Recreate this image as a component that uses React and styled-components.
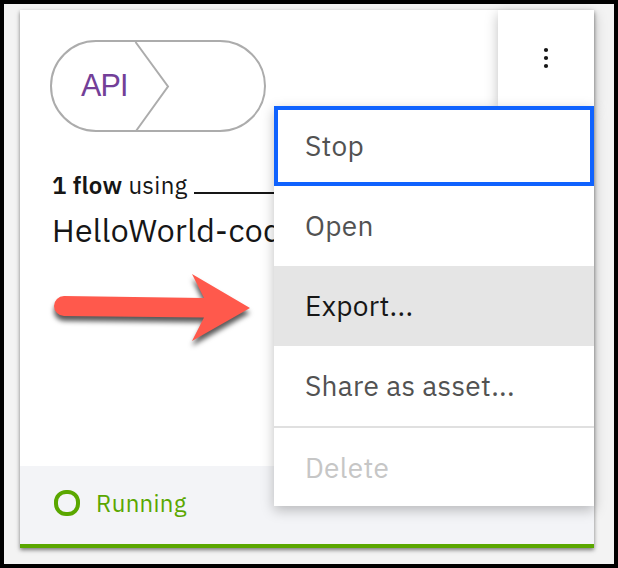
import React from "react";
import styled, { createGlobalStyle } from "styled-components";

const GlobalStyle = createGlobalStyle`
  *, *::before, *::after { box-sizing: border-box; }
  body { margin: 0; font-family: "IBM Plex Sans", "Open Sans", "Noto Sans", sans-serif; color: #161616; }
`;

const Frame = styled.main`
  width: 618px;
  height: 568px;
  padding: 6px 20px 16px 16px;
  border: 4px solid #000;
  background: #f3f3f3;
  overflow: hidden;
`;

const Card = styled.article`
  position: relative;
  display: flex;
  flex-direction: column;
  width: 574px;
  height: 538px;
  background: #fff;
  border-bottom: 4px solid #5aa700;
  box-shadow: 0 2px 4px rgba(0, 0, 0, 0.5);
`;

const CardHeader = styled.header`
  display: flex;
  justify-content: space-between;
  height: 96px;
  padding-left: 30px;
`;

const FlowBadge = styled.svg`
  display: block;
  width: 218px;
  height: 94px;
  margin-top: 29px;
`;

const OverflowButton = styled.button`
  display: flex;
  align-items: center;
  justify-content: center;
  width: 96px;
  height: 96px;
  padding: 0;
  border: 0;
  background: #fff;
  box-shadow: 0 4px 12px rgba(0, 0, 0, 0.25);
`;

const CardBody = styled.section`
  flex: 1;
  padding: 61px 0 0 32px;
`;

const Summary = styled.div`
  display: flex;
  height: 36px;
  line-height: 36px;
  font-size: 24px;
  letter-spacing: 0.32px;
  white-space: pre;
`;

const SummaryText = styled.div`
  display: flex;
  width: 142px;
`;

const FlowCount = styled.strong`
  font-weight: 600;
`;

const Rule = styled.span`
  width: 100px;
  height: 2px;
  margin-top: 25px;
  background: #161616;
`;

const Title = styled.h2`
  width: 260px;
  height: 46px;
  margin: 4px 0 0;
  font-size: 32px;
  font-weight: 400;
  line-height: 46px;
  letter-spacing: 0.32px;
  white-space: nowrap;
`;

const Arrow = styled.svg`
  display: block;
  width: 210px;
  height: 90px;
  margin: 19px 0 0 -8px;
  overflow: visible;
  filter: drop-shadow(0 5px 2.5px rgba(0, 0, 0, 0.65));
`;

const CardFooter = styled.footer`
  display: flex;
  align-items: center;
  gap: 16px;
  height: 78px;
  padding: 0 0 4px 34px;
  background: #f3f4f7;
  color: #5aa700;
  font-size: 24px;
  letter-spacing: 0.32px;
`;

const StatusRing = styled.span`
  width: 26px;
  height: 26px;
  border: 4px solid #5aa700;
  border-radius: 12px;
`;

const Menu = styled.ul`
  position: absolute;
  top: 96px;
  right: 0;
  width: 320px;
  margin: 0;
  padding: 0;
  list-style: none;
  background: #fff;
  box-shadow: 0 4px 12px rgba(0, 0, 0, 0.25);
`;

const MenuItem = styled.li`
  display: flex;
  align-items: center;
  height: 80px;
  padding-left: ${(p) => (p.$focused ? 27 : 31)}px;
  padding-top: ${(p) => (p.$divided ? 2 : 0)}px;
  border: ${(p) => (p.$focused ? "4px solid #0f62fe" : "0")};
  border-top: ${(p) => (p.$divided ? "2px solid #e0e0e0" : undefined)};
  background: ${(p) => (p.$hovered ? "#e5e5e5" : "#fff")};
  color: ${(p) => (p.$disabled ? "#c6c6c6" : p.$hovered ? "#161616" : "#525252")};
  font-size: 28px;
  letter-spacing: 0.32px;
  line-height: 36px;
  white-space: nowrap;
`;

const ITEMS = [
  { label: "Stop", focused: true },
  { label: "Open" },
  { label: "Export...", hovered: true },
  { label: "Share as asset..." },
  { label: "Delete", disabled: true, divided: true },
];

export default function App() {
  return (
    <>
      <GlobalStyle />
      <Frame>
        <Card>
          <CardHeader>
            <FlowBadge viewBox="0 0 218 94" fill="none" stroke="#acacac" strokeWidth="2">
              <rect x="1" y="2" width="214" height="90" rx="45" />
              <path d="M85.5 3 L118 47.5 L86 92" />
              <text x="31" y="57" fill="#733f98" stroke="none" fontFamily="Liberation Sans, Arial, sans-serif" fontSize="30.5" textLength="47.5">API</text>
            </FlowBadge>
            <OverflowButton aria-label="Actions">
              <svg width="8" height="24" viewBox="0 0 8 24" fill="#161616">
                <circle cx="4" cy="4" r="2.1" />
                <circle cx="4" cy="12" r="2.1" />
                <circle cx="4" cy="20" r="2.1" />
              </svg>
            </OverflowButton>
          </CardHeader>
          <CardBody>
            <Summary>
              <SummaryText>
                <FlowCount>1 flow </FlowCount>
                <span>using</span>
              </SummaryText>
              <Rule />
            </Summary>
            <Title>HelloWorld-code</Title>
            <Arrow viewBox="0 0 210 90" fill="#ff594c">
              <path d="M20 24 L160 26 L148 2 L206 36 L148 69 L160 45.5 L20 44 A10 10 0 0 1 20 24 Z" />
            </Arrow>
          </CardBody>
          <CardFooter>
            <StatusRing />
            <span>Running</span>
          </CardFooter>
          <Menu role="menu">
            {ITEMS.map((item) => (
              <MenuItem
                key={item.label}
                role="menuitem"
                $focused={item.focused}
                $hovered={item.hovered}
                $disabled={item.disabled}
                $divided={item.divided}
              >
                {item.label}
              </MenuItem>
            ))}
          </Menu>
        </Card>
      </Frame>
    </>
  );
}
